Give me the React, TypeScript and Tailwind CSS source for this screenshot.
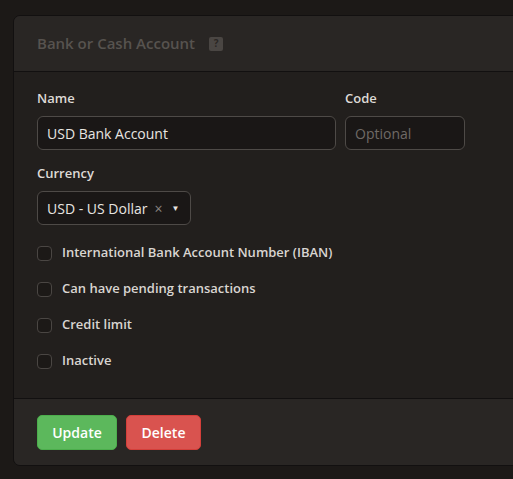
import React from 'react';

const font = { fontFamily: '"Open Sans", "Noto Sans", sans-serif' };

function Check({ label }: { label: string }) {
  return (
    <label className="flex items-center gap-[10px] h-[36px]">
      <span className="w-[15px] h-[15px] rounded-[4px] border border-[#4a4643] bg-[#1c1917] shrink-0" />
      <span className="text-[13px] font-semibold text-[#d9d5d1]">{label}</span>
    </label>
  );
}

export default function App() {
  return (
    <div className="w-[513px] h-[479px] overflow-hidden bg-[#1c1917] pt-[15px] pl-[13px]" style={font}>
      <div className="w-[560px] rounded-[7px] border border-[#121010] bg-[#221f1d] overflow-hidden">
        {/* header */}
        <div className="h-[56px] bg-[#292624] border-b border-[#121010] flex items-center pl-[23px] gap-[14px]">
          <span className="text-[15px] font-semibold text-[#57534f]">Bank or Cash Account</span>
          <span className="w-[14px] h-[14px] rounded-[2px] bg-[#4a4643] text-[#2a2624] text-[10px] font-bold flex items-center justify-center">?</span>
        </div>

        {/* body */}
        <div className="pl-[23px] pt-[17px] pb-[19px]">
          <div className="flex gap-[9px]">
            <div className="w-[299px]">
              <div className="text-[13px] font-semibold text-[#dedad6] h-[18px] leading-[18px]">Name</div>
              <div className="mt-[9px] h-[34px] rounded-[6px] border border-[#4e4a47] bg-[#1a1716] flex items-center px-[9px] text-[14px] text-[#e8e5e1]">
                USD Bank Account
              </div>
            </div>
            <div className="w-[120px]">
              <div className="text-[13px] font-semibold text-[#dedad6] h-[18px] leading-[18px]">Code</div>
              <div className="mt-[9px] h-[34px] rounded-[6px] border border-[#4e4a47] bg-[#1a1716] flex items-center px-[9px] text-[14px] text-[#6f6a66]">
                Optional
              </div>
            </div>
          </div>

          <div className="mt-[14px] text-[13px] font-semibold text-[#dedad6] h-[18px] leading-[18px]">Currency</div>
          <div className="mt-[9px] w-[154px] h-[34px] rounded-[6px] border border-[#4e4a47] bg-[#1a1716] flex items-center pl-[9px] text-[14px] text-[#e8e5e1]">
            <span>USD - US Dollar</span>
            <span className="ml-[7px] text-[#8a8581] text-[14px]">×</span>
            <span className="ml-[9px] text-[#e8e5e1] text-[8px]">▼</span>
          </div>

          <div className="mt-[10px]">
            <Check label="International Bank Account Number (IBAN)" />
            <Check label="Can have pending transactions" />
            <Check label="Credit limit" />
            <Check label="Inactive" />
          </div>
        </div>

        {/* footer */}
        <div className="border-t border-[#121010] bg-[#292624] h-[67px] pl-[23px] flex items-center gap-[9px]">
          <button className="h-[35px] w-[80px] rounded-[5px] bg-[#5cb85c] border border-[#4cae4c] text-white text-[14px] font-semibold">
            Update
          </button>
          <button className="h-[35px] w-[75px] rounded-[5px] bg-[#d9534f] border border-[#d43f3a] text-white text-[14px] font-semibold">
            Delete
          </button>
        </div>
      </div>
    </div>
  );
}
